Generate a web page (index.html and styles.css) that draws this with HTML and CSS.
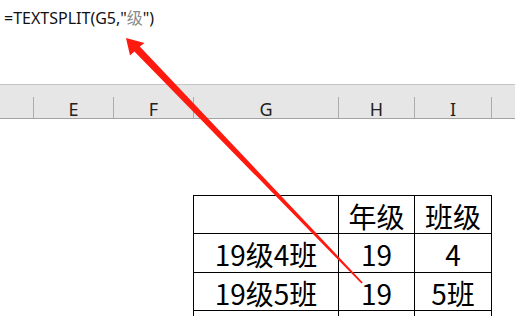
FILE: index.html
```html
<!DOCTYPE html>
<html lang="zh-CN">
<head>
<meta charset="utf-8">
<link rel="stylesheet" href="styles.css">
</head>
<body>
<div class="formula-bar"><span>=TEXTSPLIT(G5,"</span><span class="cjk-light">级</span><span>")</span></div>
<div class="col-header">
  <div class="hcell w-a"></div>
  <div class="hcell w-e">E</div>
  <div class="hcell w-f">F</div>
  <div class="hcell w-g">G</div>
  <div class="hcell w-h">H</div>
  <div class="hcell w-i">I</div>
  <div class="hcell w-rest"></div>
</div>
<div class="sheet">
  <div class="grid">
    <div class="cell"></div><div class="cell">年级</div><div class="cell">班级</div>
    <div class="cell">19级4班</div><div class="cell">19</div><div class="cell">4</div>
    <div class="cell">19级5班</div><div class="cell">19</div><div class="cell">5班</div>
    <div class="cell last"></div><div class="cell last"></div><div class="cell last"></div>
  </div>
</div>
<svg class="arrow" width="515" height="316" viewBox="0 0 515 316">
  <polygon fill="#ff1a0f" points="126,38 144.5,43 139.8,46.4 362.8,282.4 361.4,283.6 134.4,51.6 130,55.5"/>
</svg>
</body>
</html>
```
FILE: styles.css
```css
html, body {
  margin: 0;
  padding: 0;
  width: 515px;
  height: 316px;
  overflow: hidden;
  background: #fff;
  font-family: "Noto Sans CJK SC", "Noto Sans", sans-serif;
  color: #000;
}
.formula-bar {
  height: 84px;
  box-sizing: border-box;
  padding: 5px 0 0 4px;
  font-size: 16px;
  line-height: 24px;
  font-family: "Noto Sans", "Noto Sans CJK SC", sans-serif;
  color: #111;
}
.cjk-light {
  font-family: "Noto Sans CJK SC", sans-serif;
  color: #8a8a8a;
  font-size: 16px;
}
.col-header {
  display: flex;
  align-items: flex-end;
  height: 35px;
  box-sizing: border-box;
  border-top: 1px solid #c4c4c4;
  border-bottom: 1px solid #a3a3a3;
  background: #e6e6e6;
}
.hcell {
  height: 21px;
  box-sizing: border-box;
  border-left: 1px solid #acacac;
  display: flex;
  align-items: center;
  justify-content: center;
  font-family: "Noto Sans", sans-serif;
  font-size: 18px;
  line-height: 21px;
  padding-top: 3px;
  color: #222;
}
.w-a { width: 33px; border-left: none; }
.w-e { width: 80px; }
.w-f { width: 80px; }
.w-g { width: 145px; }
.w-h { width: 76px; }
.w-i { width: 77px; }
.w-rest { flex: 1; }
.sheet {
  padding: 76px 0 0 193px;
}
.grid {
  display: grid;
  grid-template-columns: 145px 76px 77px;
  grid-template-rows: 38px 39px 38px 5px;
  border-left: 1px solid #000;
  border-top: 1px solid #000;
  width: max-content;
}
.cell {
  box-sizing: border-box;
  border-right: 1px solid #000;
  border-bottom: 1px solid #000;
  display: flex;
  align-items: center;
  justify-content: center;
  font-size: 28px;
  line-height: 1;
  padding-top: 2px;
}
.cell.last {
  border-bottom: none;
}
.arrow {
  position: absolute;
  left: 0;
  top: 0;
  pointer-events: none;
}
```
